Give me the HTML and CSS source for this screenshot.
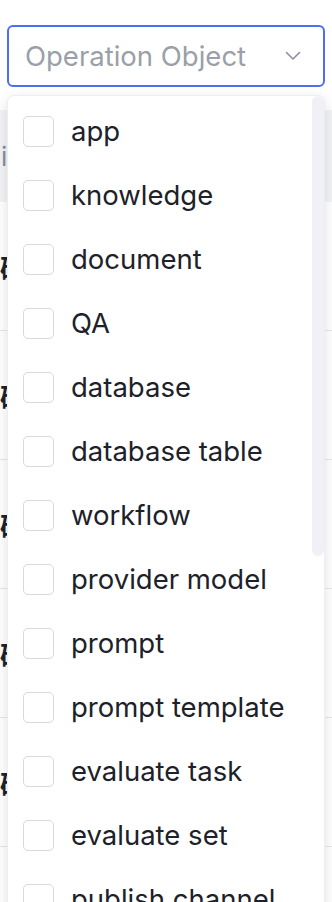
FILE: index.html
```html
<!DOCTYPE html>
<html lang="en">
<head>
    <meta charset="UTF-8">
    <meta name="viewport" content="width=device-width, initial-scale=1.0">
    <title>Operation Object</title>
    <link rel="stylesheet" href="styles.css">
</head>
<body>
    <!-- Filter bar with the open select -->
    <div class="filter">
        <div class="select">
            <span class="placeholder">Operation Object</span>
            <svg class="chevron" width="16" height="10" viewBox="0 0 16 10">
                <polyline points="1.5,1.5 8,8 14.5,1.5" fill="none" stroke="#8a8f99" stroke-width="1.6" stroke-linecap="round" stroke-linejoin="round"/>
            </svg>
        </div>

        <!-- Dropdown panel -->
        <div class="dropdown">
            <ul class="options">
                <li><span class="box"></span>app</li>
                <li><span class="box"></span>knowledge</li>
                <li><span class="box"></span>document</li>
                <li><span class="box"></span>QA</li>
                <li><span class="box"></span>database</li>
                <li><span class="box"></span>database table</li>
                <li><span class="box"></span>workflow</li>
                <li><span class="box"></span>provider model</li>
                <li><span class="box"></span>prompt</li>
                <li><span class="box"></span>prompt template</li>
                <li><span class="box"></span>evaluate task</li>
                <li><span class="box"></span>evaluate set</li>
                <li><span class="box"></span>publish channel</li>
            </ul>
            <div class="scrollbar"><div class="thumb"></div></div>
        </div>
    </div>

    <!-- Table behind the dropdown -->
    <div class="table">
        <div class="thead"><span class="head-text">i</span></div>
        <div class="row"><span class="cell">確認</span></div>
        <div class="row"><span class="cell">確認</span></div>
        <div class="row"><span class="cell">確認</span></div>
        <div class="row"><span class="cell">確認</span></div>
        <div class="row"><span class="cell">確認</span></div>
        <div class="row"><span class="cell">確認</span></div>
    </div>
</body>
</html>
```

FILE: styles.css
```css
/* Base page */
html, body {
    height: 902px;
    overflow: hidden;
}
body {
    margin: 0;
    background: #fff;
    font-family: Inter, "Noto Sans CJK JP", sans-serif;
    color: #1d2129;
}
/* Filter bar */
.filter {
    position: relative;
    padding: 25px 7px 0;
    z-index: 2;
}
.select {
    height: 58px;
    border: 2px solid #4c6ef5;
    border-radius: 6px;
    display: flex;
    align-items: center;
    justify-content: space-between;
    padding: 0 22px 0 16px;
    background: #fff;
}
.placeholder {
    font-size: 27.5px;
    color: #9a9fa9;
}
/* Dropdown */
.dropdown {
    position: absolute;
    top: 95px;
    left: 7px;
    width: 318px;
    height: 830px;
    box-sizing: border-box;
    display: flex;
    overflow: hidden;
    background: #fff;
    border: 1px solid #eceef1;
    border-radius: 7px;
    box-shadow: 0 4px 14px rgba(0, 0, 0, 0.12);
}
.options {
    list-style: none;
    margin: 0;
    padding: 3px 0 0 15px;
    flex: 1;
}
.options li {
    height: 64px;
    display: flex;
    align-items: center;
    gap: 17px;
    font-size: 27.5px;
    white-space: nowrap;
}
.box {
    width: 29px;
    height: 29px;
    border: 1px solid #d7d9df;
    border-radius: 5px;
    flex-shrink: 0;
}
.scrollbar {
    width: 12px;
}
.thumb {
    height: 460px;
    background: #f0f1f7;
    border-radius: 6px;
}
/* Table in the background */
.table {
    margin-top: 23px;
}
.thead {
    height: 92px;
    background: #f2f3f5;
    display: flex;
    align-items: center;
}
.head-text {
    font-size: 26px;
    color: #86909c;
    margin-left: 1px;
}
.row {
    height: 128px;
    border-bottom: 1px solid #e5e6eb;
    display: flex;
    align-items: center;
}
.cell {
    font-size: 26px;
    font-weight: 600;
    color: #1d2129;
}
```
